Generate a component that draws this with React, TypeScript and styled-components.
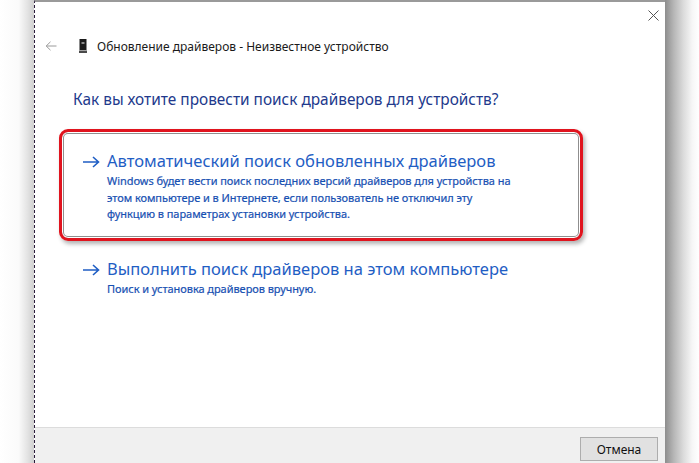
import React from 'react';
import styled, { createGlobalStyle } from 'styled-components';

const GlobalStyle = createGlobalStyle`
  html, body {
    margin: 0;
    padding: 0;
    background: #ffffff;
  }
  body {
    font-family: "Noto Sans", "Open Sans", sans-serif;
  }
`;

const options = [
  {
    title: 'Автоматический поиск обновленных драйверов',
    lines: [
      'Windows будет вести поиск последних версий драйверов для устройства на',
      'этом компьютере и в Интернете, если пользователь не отключил эту',
      'функцию в параметрах установки устройства.',
    ],
    highlighted: true,
  },
  {
    title: 'Выполнить поиск драйверов на этом компьютере',
    lines: ['Поиск и установка драйверов вручную.'],
    highlighted: false,
  },
];

const ArrowRight = () => (
  <svg width="18" height="12" viewBox="0 0 18 12" fill="none">
    <path d="M1 6h15.5M11 1l5.5 5-5.5 5" stroke="#1f5ec4" strokeWidth="1.6" />
  </svg>
);

const BackArrow = () => (
  <svg width="12" height="10" viewBox="0 0 12 10" fill="none">
    <path d="M11.5 5H1.2M5.5 0.8L1.2 5l4.3 4.2" stroke="#9a9a9a" strokeWidth="1" />
  </svg>
);

const DeviceIcon = () => (
  <svg width="8" height="14" viewBox="0 0 8 14">
    <rect x="0.5" y="0" width="7" height="11" fill="#1b1b1b" />
    <rect x="2.5" y="3" width="3" height="2" fill="#8a8a8a" />
    <rect x="0" y="11.5" width="8" height="2.5" fill="#4a4a4a" />
  </svg>
);

const CloseIcon = () => (
  <svg width="11" height="11" viewBox="0 0 11 11">
    <path d="M0.5 0.5l10 10M10.5 0.5l-10 10" stroke="#555" strokeWidth="1" />
  </svg>
);

export default function App() {
  return (
    <>
      <GlobalStyle />
      <StyledPage>
        <StyledLeftShade />
        <StyledWindow>
          <StyledTitleBar>
            <StyledClose>
              <CloseIcon />
            </StyledClose>
          </StyledTitleBar>
          <StyledHeader>
            <StyledBack>
              <BackArrow />
            </StyledBack>
            <DeviceIcon />
            <StyledHeaderText>Обновление драйверов - Неизвестное устройство</StyledHeaderText>
          </StyledHeader>
          <StyledBody>
            <StyledQuestion>Как вы хотите провести поиск драйверов для устройств?</StyledQuestion>
            <StyledOptions>
              {options.map(({ title, lines, highlighted }) => (
                <StyledOptionFrame key={title} $highlighted={highlighted}>
                  <StyledOption>
                    <StyledArrow>
                      <ArrowRight />
                    </StyledArrow>
                    <StyledOptionText>
                      <StyledOptionTitle>{title}</StyledOptionTitle>
                      {lines.map(line => (
                        <StyledOptionLine key={line}>{line}</StyledOptionLine>
                      ))}
                    </StyledOptionText>
                  </StyledOption>
                </StyledOptionFrame>
              ))}
            </StyledOptions>
          </StyledBody>
          <StyledFooter>
            <StyledButton>Отмена</StyledButton>
          </StyledFooter>
        </StyledWindow>
        <StyledRightShade />
      </StyledPage>
    </>
  );
}

const StyledPage = styled.div`
  display: flex;
  width: 699px;
  height: 463px;
  overflow: hidden;
  background: #ffffff;
`;

const StyledLeftShade = styled.div`
  width: 34px;
  flex-shrink: 0;
  background: linear-gradient(to right, #ffffff 0%, #fafafa 55%, #e4e4e4 80%, #cfcfcf 100%);
`;

const StyledRightShade = styled.div`
  width: 34px;
  flex-shrink: 0;
  background: linear-gradient(to right, #8d8d8d 0%, #b5b5b5 25%, #dcdcdc 55%, #f6f6f6 80%, #ffffff 100%);
`;

const StyledWindow = styled.div`
  width: 631px;
  flex-shrink: 0;
  display: flex;
  flex-direction: column;
  background: #ffffff;
  border-top: 2px solid #9a9a9a;
  border-left: 1px dashed #2a1a3a;
  box-sizing: border-box;
`;

const StyledTitleBar = styled.div`
  height: 28px;
  display: flex;
  justify-content: flex-end;
  align-items: center;
  padding-right: 1px;
`;

const StyledClose = styled.span`
  display: flex;
  width: 22px;
  justify-content: center;
  margin-top: -2px;
`;

const StyledHeader = styled.div`
  display: flex;
  align-items: center;
  height: 32px;
  padding-left: 10px;
  column-gap: 8px;
`;

const StyledBack = styled.span`
  display: flex;
  width: 16px;
  margin-right: 10px;
`;

const StyledHeaderText = styled.span`
  font-size: 12px;
  color: #1a1a1a;
  margin-left: 2px;
`;

const StyledBody = styled.div`
  flex: 1;
  padding: 27px 0 0 24px;
`;

const StyledQuestion = styled.div`
  font-size: 15.4px;
  color: #22398c;
  line-height: 22px;
  padding-left: 14px;
`;

const StyledOptions = styled.div`
  display: flex;
  flex-direction: column;
  row-gap: 4px;
  margin-top: 18px;
`;

const StyledOptionFrame = styled.div<{ $highlighted: boolean }>`
  width: 524px;
  box-sizing: border-box;
  border: 3px solid ${({ $highlighted }) => ($highlighted ? '#e0141e' : 'transparent')};
  border-radius: 9px;
  box-shadow: ${({ $highlighted }) =>
    $highlighted ? 'inset 0 0 0 1px #ffffff, inset 0 0 0 2px #8f8f8f, 2px 3px 4px rgba(0,0,0,0.3)' : 'none'};
  padding: ${({ $highlighted }) => ($highlighted ? '18px 0 15px 20px' : '10px 0 0 20px')};
`;

const StyledOption = styled.div`
  display: flex;
  column-gap: 7px;
`;

const StyledArrow = styled.span`
  display: flex;
  padding-top: 6px;
`;

const StyledOptionText = styled.div`
  display: flex;
  flex-direction: column;
`;

const StyledOptionTitle = styled.div`
  font-size: 16.5px;
  line-height: 22px;
  color: #1f5ec4;
  margin-bottom: 1px;
`;

const StyledOptionLine = styled.div`
  font-size: 11px;
  line-height: 16.5px;
  letter-spacing: -0.05px;
  color: #1750b2;
  -webkit-text-stroke: 0.2px #1750b2;
`;

const StyledFooter = styled.div`
  height: 36px;
  background: #f0f0f0;
  border-top: 1px solid #dcdcdc;
  display: flex;
  justify-content: flex-end;
  align-items: flex-start;
  padding: 9px 7px 0 0;
  box-sizing: border-box;
`;

const StyledButton = styled.button`
  width: 78px;
  height: 24px;
  font-family: "Noto Sans", sans-serif;
  font-size: 12px;
  color: #111;
  background: #e1e1e1;
  border: 1px solid #adadad;
  padding: 0;
`;
